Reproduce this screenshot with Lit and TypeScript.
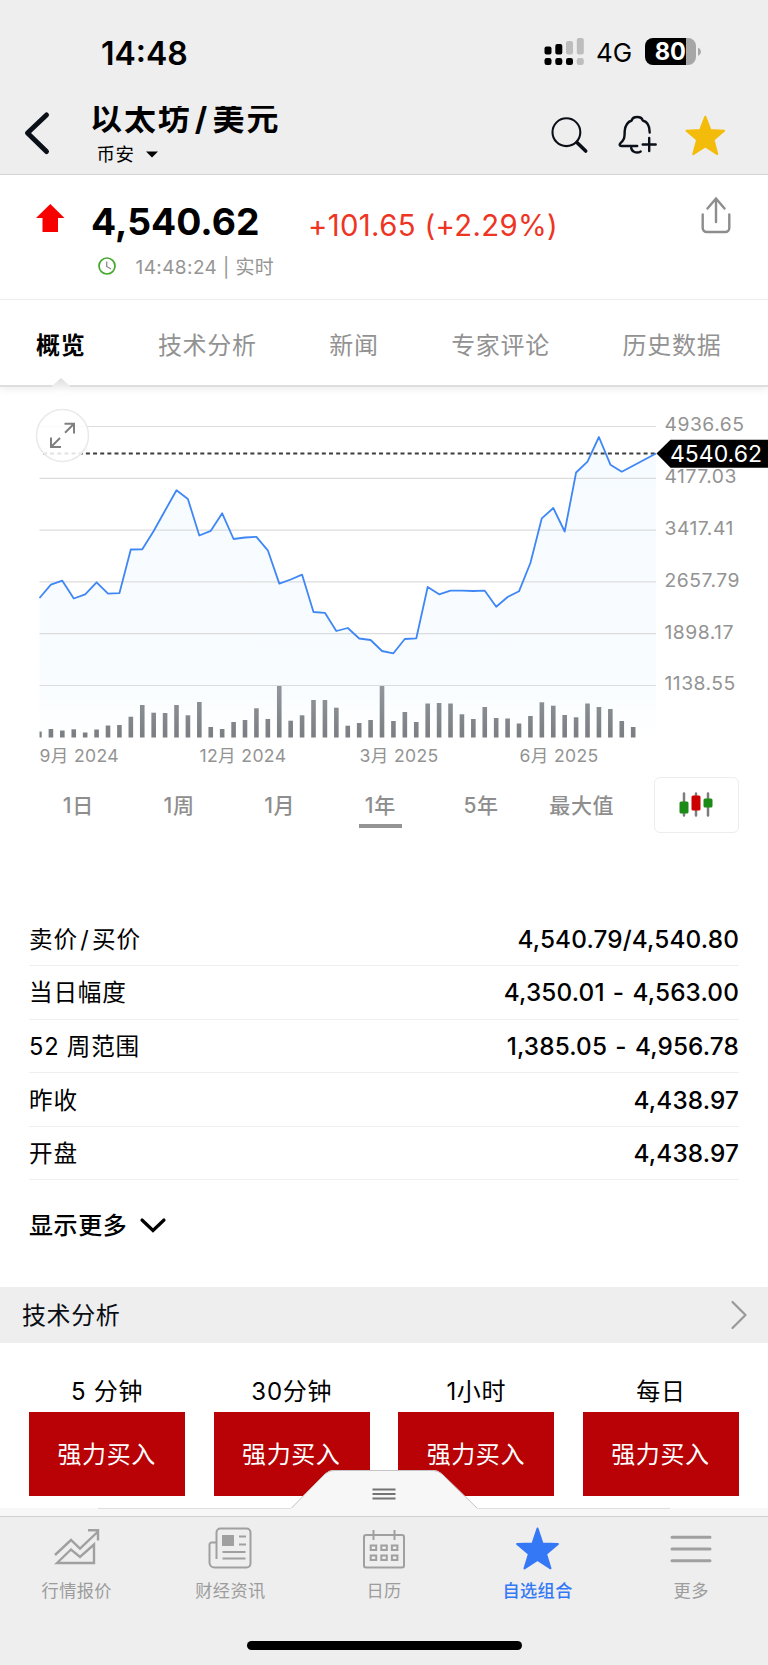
import { LitElement, html, svg, css } from "lit";
import { customElement } from "lit/decorators.js";
import { classMap } from "lit/directives/class-map.js";

const X0 = 39.5;
const STEP = 11.417;
const PRICES = [
  598, 584.7, 580.7, 598.5, 594.3, 582.3, 593.7, 593.2, 549.5, 549.3, 531, 510.5, 490.3, 499, 535.5, 530.8,
  513.3, 539, 537.5, 536.8, 550.3, 583.6, 579.5, 574.7, 612, 612.8, 631, 628, 638.5, 640, 651, 653.3, 639,
  638.3, 587, 594.3, 590.7, 590.7, 591, 590.7, 606.7, 597, 591.3, 563, 518.3, 508, 531.5, 472.5, 461.7, 437,
  464.7, 471.7,
];
const VOLUMES = [
  6, 8.5, 7, 8.2, 5, 8, 12, 12.5, 20.8, 32.5, 24.8, 24.5, 32.5, 22.2, 35.5, 10.5, 8.5, 15.5, 17.5, 29.2, 18.5,
  51.5, 16.8, 22.2, 37.5, 37.5, 29.8, 11.8, 14.5, 17.5, 51.5, 16.5, 25.5, 15.5, 34, 34.5, 34, 23.2, 18.5,
  30.5, 19.5, 19, 14, 21.5, 35.2, 31.8, 22.5, 20.2, 34, 30.5, 28.5, 16.5, 10.5,
];
const LEVELS = ["4936.65", "4177.03", "3417.41", "2657.79", "1898.17", "1138.55"];
const TABS = ["概览", "技术分析", "新闻", "专家评论", "历史数据"];
const DATES = ["9月 2024", "12月 2024", "3月 2025", "6月 2025"];
const RANGES = ["1日", "1周", "1月", "1年", "5年", "最大值"];
const STATS = [
  [html`卖价<span class="slash">/</span>买价`, "4,540.79/4,540.80"],
  ["当日幅度", "4,350.01 - 4,563.00"],
  ["52 周范围", "1,385.05 - 4,956.78"],
  ["昨收", "4,438.97"],
  ["开盘", "4,438.97"],
];
const SIGNALS = ["5 分钟", "30分钟", "1小时", "每日"];

const STAR = "M20 1.2 L25.2 14.6 L38.8 15.3 L28.2 24.2 L32 38.6 L20 31 L8 38.6 L11.8 24.2 L1.2 15.3 L14.8 14.6 Z";

const ICONS: Record<string, unknown> = {
  行情报价: svg`<path stroke-width="2.4" d="M2 29 18 14 27 22.5 44.5 6M35 4.3H45V14.5M4 37 18 23.5 27 31 41 18.5V37Z"/>`,
  财经资讯: svg`<path d="M10.5 33V6.5a4 4 0 0 1 4-4h26a4 4 0 0 1 4 4v31a4 4 0 0 1-4 4h-32a5 5 0 0 1-5-5v-18a2 2 0 0 1 2-2h5M16.5 26h23M16.5 32.5h23M33 10.5h7M33 18.5h7"/><path class="solid" d="M16 9h12v11H16z"/>`,
  日历: svg`<rect x="4" y="9" width="40" height="32.5" rx="2"/><path d="M13.5 4v10M34.5 4v10M10.7 19.5h5.5v4.6h-5.5zM21.3 19.5h5.5v4.6h-5.5zM31.9 19.5h5.5v4.6h-5.5zM10.7 29.5h5.5v4.6h-5.5zM21.3 29.5h5.5v4.6h-5.5zM31.9 29.5h5.5v4.6h-5.5z"/>`,
  自选组合: svg`<path class="solid" d="M23.5 2.5 28.5 17.6 43.9 18 32.1 28 36.5 42.4 23.5 34 10.5 42.4 14.9 28 3.1 18 18.5 17.6Z" stroke-linejoin="round"/>`,
  更多: svg`<path d="M5 11.2h38M5 23h38M5 34.8h38" stroke-width="3" stroke-linecap="round"/>`,
};

@customElement("price-chart")
export class PriceChart extends LitElement {
  static styles = css`
    :host { display: block; height: 352px; }
    .plot { display: block; }
    .grid { stroke: #dcdcdc; stroke-width: 1.2; }
    .dash { stroke: #3d3d3d; stroke-width: 1.8; stroke-dasharray: 4 3.15; }
    .area { fill: url(#fade); }
    .line { fill: none; stroke: #3f87f5; stroke-width: 1.8; stroke-linejoin: round; }
    .bar { fill: url(#steel); }
    .level { font: 400 19.3px Inter, sans-serif; fill: #939393; letter-spacing: 0.5px; }
    .now { font: 400 23px Inter, sans-serif; fill: #fff; }
    .disc { fill: #fff; fill-opacity: 0.85; stroke: #eaeaea; stroke-width: 1.6; }
    .arrows { fill: none; stroke: #808080; stroke-width: 2; }
  `;
  render() {
    const pts = PRICES.map((y, i) => `${(X0 + i * STEP).toFixed(1)},${y}`).concat("656,453.5");
    return html`<svg class="plot" width="768" height="352" viewBox="0 388 768 352">
      <defs>
        <linearGradient id="fade" gradientUnits="userSpaceOnUse" x1="0" y1="437" x2="0" y2="737">
          <stop offset="0" stop-color="#f6fbff" /><stop offset=".82" stop-color="#f8fcff" /><stop offset="1" stop-color="#fff" />
        </linearGradient>
        <linearGradient id="steel" gradientUnits="userSpaceOnUse" x1="0" y1="686" x2="0" y2="738">
          <stop offset="0" stop-color="#92979d" /><stop offset="1" stop-color="#7a7e82" />
        </linearGradient>
      </defs>
      <polygon class="area" points="${X0},737 ${pts.join(" ")} 656,737"></polygon>
      ${LEVELS.map((_, i) => svg`<line class="grid" x1="39.5" x2="656" y1=${426.5 + i * 51.8} y2=${426.5 + i * 51.8} />`)}
      ${VOLUMES.map((v, i) => svg`<rect class="bar" x=${i ? X0 + i * STEP - 2.3 : X0} y=${737.5 - v} width=${i ? 4.6 : 2.2} height=${v} />`)}
      <line class="dash" x1="43" x2="656" y1="453.5" y2="453.5" />
      <polyline class="line" points=${pts.join(" ")}></polyline>
      ${LEVELS.map((t, i) => svg`<text class="level" x="664.5" y=${431.3 + i * 51.8}>${t}</text>`)}
      <path d="M656.5 453.5 670.5 439.7H768V467.7H670.5Z" />
      <text class="now" x="670" y="462">4540.62</text>
      <circle class="disc" cx="62.5" cy="435.5" r="26" />
      <path class="arrows" d="M64.5 423.7H74V433.5M74 423.7 65 432.7M51 437.5V447H61M51 447 60 438" />
    </svg>`;
  }
}

@customElement("app-root")
export class AppRoot extends LitElement {
  static styles = css`
    :host { display: block; width: 768px; height: 1665px; position: relative; overflow: hidden; background: #fff; color: #000; font-family: Inter, "Noto Sans CJK SC", sans-serif; }
    * { box-sizing: border-box; }
    svg { display: block; flex: none; overflow: visible; }
    .status { height: 102px; background: #eee; display: flex; align-items: flex-start; padding: 34px 67px 0 101px; }
    .clock { font-size: 32px; line-height: 39px; font-weight: 600; flex: 1; }
    .net { font-size: 26px; line-height: 38px; width: 49px; }
    .signal { margin: 4px 12px 0 0; }
    .battery { margin-top: 4px; }
    .head { height: 73px; background: #eee; border-bottom: 1.5px solid #d2d2d2; display: flex; padding-left: 24px; }
    .back { margin-top: 9px; }
    .titles { margin: 4px 0 0 40px; flex: 1; }
    .title { height: 32px; overflow: hidden; font-size: 32px; line-height: 26px; font-weight: 700; letter-spacing: 1.9px; white-space: pre; }
    .title .slash { margin: 0 3.5px 0 3px; }
    .sub { display: flex; align-items: center; gap: 11px; padding-left: 6.5px; font-size: 18.5px; line-height: 32px; letter-spacing: .6px; }
    .sub svg { margin-top: 1px; }
    .tools { display: flex; margin: 12px 39px 0 0; }
    .quote { height: 125px; border-bottom: 1px solid #eee; display: flex; align-items: flex-start; }
    .up { margin: 29px 0 0 36px; }
    .figures { margin-left: 26px; flex: 1; }
    .prices { display: flex; align-items: baseline; margin-top: 23px; line-height: 48px; }
    .last { font-size: 37.3px; font-weight: 700; width: 217px; }
    .change { font-size: 29.3px; color: #ee3423; letter-spacing: .35px; position: relative; top: 1px; }
    .time { display: flex; align-items: flex-start; margin: 4px 0 0 6.5px; gap: 20px; font-size: 19px; line-height: 30px; color: #959595; letter-spacing: .4px; }
    .time svg { margin-top: 4px; }
    .share { margin: 21px 37px 0 0; }
    .tabs { height: 87px; display: flex; justify-content: space-between; padding: 24px 46.5px 0 36px; font-size: 24px; line-height: 43px; letter-spacing: .75px; color: #929292; border-bottom: 2px solid #dedede; box-shadow: 0 3px 7px #0001; position: relative; margin-bottom: 1px; }
    .tab.on { color: #000; font-weight: 700; }
    .notch { position: absolute; left: 51px; top: 77px; }
    .dates { height: 34px; padding: 1px 0 0 39.5px; display: grid; grid-template-columns: repeat(4, 160px); font-size: 17.6px; line-height: 30px; letter-spacing: .35px; color: #939393; white-space: nowrap; }
    .ranges { height: 138.5px; display: grid; grid-template-columns: repeat(6, 100.7px) 1fr; padding-left: 28px; text-align: center; font-size: 21px; line-height: 40px; letter-spacing: .7px; color: #8e8e8e; }
    .range { padding-top: 12px; font-weight: 500; }
    .range.on::after { content: ""; display: block; width: 43px; height: 4px; margin: -2px auto 0; background: #949494; }
    .candles { justify-self: start; margin: 3px 0 0 21.5px; width: 85px; height: 56px; border: 1.5px solid #ededed; border-radius: 6px; padding: 14px 23px; }
    .stats { padding: 0 29px; }
    .stat { height: 53.6px; border-bottom: 1.3px solid #efefef; display: flex; justify-content: space-between; align-items: center; font-size: 23.6px; }
    .key { letter-spacing: .8px; margin-top: -2px; }
    .key .slash { margin: 0 2.5px; }
    .val { font-size: 24.3px; font-weight: 500; letter-spacing: .15px; word-spacing: 1.6px; }
    .more { height: 99px; display: flex; align-items: flex-start; gap: 13px; padding: 25.5px 0 0 29px; font-size: 24px; line-height: 40px; letter-spacing: .6px; font-weight: 500; }
    .more svg { margin-top: 12px; }
    .band { height: 56px; margin-top: 7.5px; background: #eee; display: flex; align-items: center; justify-content: space-between; padding: 0 20px 0 22px; font-size: 24px; letter-spacing: .6px; color: #0a0d14; }
    .band span { margin-top: -3px; }
    .signals { display: grid; grid-template-columns: repeat(4, 156.3px); gap: 28.3px; padding: 28px 0 0 29px; text-align: center; }
    .when { font-size: 24px; line-height: 42px; height: 41px; letter-spacing: .7px; }
    .verdict { height: 84px; background: #b80205; color: #fff; font-size: 24px; line-height: 85px; letter-spacing: .6px; padding-right: 1px; }
    .dock { position: absolute; left: 0; right: 0; bottom: 0; }
    .drawer { display: block; }
    .nav { height: 149px; background: #eee; border-top: 1.5px solid #cfcfcf; }
    .items { display: grid; grid-template-columns: repeat(5, 1fr); padding-top: 9px; }
    .item { display: flex; flex-direction: column; align-items: center; font-size: 17.2px; line-height: 30px; letter-spacing: .4px; color: #9c9c9c; }
    .item svg { fill: none; stroke: #a0a0a0; stroke-width: 2; margin-bottom: 6px; }
    .item .solid { fill: #a0a0a0; stroke: none; }
    .item.on { color: #3478f6; font-weight: 500; }
    .item.on .solid { fill: #3478f6; stroke: #3478f6; stroke-width: 2; }
    .home { width: 275px; height: 9px; border-radius: 5px; background: #000; margin: 35px auto 0; }
  `;

  render() {
    return html`
      <div class="status">
        <div class="clock">14:48</div>
        <svg class="signal" width="40" height="28" viewBox="0 0 40 28">
          <g fill="#000"><rect x=".5" y="8.5" width="7" height="8" rx="2" /><rect x="11.3" y="6" width="7" height="10.5" rx="2" />
          <rect x=".5" y="20" width="7" height="7" rx="2.3" /><rect x="11.3" y="20" width="7" height="7" rx="2.3" /><rect x="22" y="20" width="7" height="7" rx="2.3" /></g>
          <g fill="#bdbdbd"><rect x="22" y="3" width="7" height="13.5" rx="2" /><rect x="32.8" y="0" width="7" height="16.5" rx="2" /><rect x="32.8" y="20" width="7" height="7" rx="2.3" /></g>
        </svg>
        <div class="net">4G</div>
        <svg class="battery" width="56" height="28" viewBox="0 0 56 28">
          <path fill="#a6a6a6" d="M40 0h3a8 8 0 0 1 8 8v11a8 8 0 0 1-8 8h-3zM53 9.5q3 1.5 3 4.3t-3 4.3z" />
          <path d="M8 0h33v27H8a8 8 0 0 1-8-8V8a8 8 0 0 1 8-8z" />
          <text x="9.7" y="22" fill="#fff" font-size="23.6" font-weight="700" font-family="Inter">80</text>
        </svg>
      </div>
      <div class="head">
        <svg class="back" width="26" height="44" viewBox="0 0 26 44"><path d="M22.5 4 3.5 22 22.5 40.5" fill="none" stroke="#0b0f18" stroke-width="5" stroke-linecap="round" stroke-linejoin="round" /></svg>
        <div class="titles">
          <div class="title">以太坊<span class="slash">/</span>美元</div>
          <div class="sub">币安<svg width="12" height="7" viewBox="0 0 12 7"><path d="M0 .5h12L6 6.5z" /></svg></div>
        </div>
        <div class="tools">
          <svg width="176" height="44" viewBox="0 0 176 44" fill="none" stroke="#0b0f18" stroke-width="2.1" stroke-linecap="round" stroke-linejoin="round">
            <circle cx="13.4" cy="18.2" r="13.9" /><path d="M24.2 28.7 32.7 37" stroke-width="3.6" />
            <path stroke-width="2.4" d="M96.7 18.5C96.7 10.5 94.2 7.5 89.7 6.5 88.7 1.8 79.7 1.8 78.7 6.5 74.2 8 72.2 12 71.7 17 71.7 25 70.7 26 67.2 29.5 66.2 31 66.7 32 68.2 32H84.2M78.2 34C78.7 37.5 83.2 40 87.7 37.5M89.7 30.5h13M96.2 24v13" />
            <path transform="translate(132.3 1.5)" fill="#f4bc0a" stroke="#f4bc0a" stroke-width="2" d="${STAR}" />
          </svg>
        </div>
      </div>
      <div class="quote">
        <svg class="up" width="29" height="29" viewBox="0 0 29 29"><path fill="#f70000" d="M14.3 0 28.5 14H22V28H6.5V14H0Z" /></svg>
        <div class="figures">
          <div class="prices"><span class="last">4,540.62</span><span class="change">+101.65 (+2.29%)</span></div>
          <div class="time">
            <svg width="18" height="18" viewBox="0 0 18 18" fill="none"><circle cx="9" cy="9" r="8" stroke="#44a82e" stroke-width="1.7" /><path d="M8.7 4.5V9.5L13 12" stroke="#8a8a8a" stroke-width="1.3" /></svg>
            <span>14:48:24 | 实时</span>
          </div>
        </div>
        <svg class="share" width="30" height="38" viewBox="0 0 30 38" fill="none" stroke="#8d8d8d" stroke-width="2.4" stroke-linecap="round" stroke-linejoin="round"><path d="M1.7 18.5V32a4 4 0 0 0 4 4H24.3a4 4 0 0 0 4-4V18.5M15 26V2.5M6.5 12.5 15 2.5 23.5 12.5" /></svg>
      </div>
      <div class="tabs">
        ${TABS.map((t, i) => html`<span class=${classMap({ tab: true, on: i === 0 })}>${t}</span>`)}
        <svg class="notch" width="20" height="16" viewBox="0 0 20 16">
          <defs><linearGradient id="tip" x1="0" y1="0" x2="0" y2="1"><stop offset="0" stop-color="#dcdcdc" /><stop offset="1" stop-color="#fff" /></linearGradient></defs>
          <path d="M1 9 10 1 19 9V16H1Z" fill="url(#tip)" />
        </svg>
      </div>
      <price-chart></price-chart>
      <div class="dates">${DATES.map((d) => html`<span>${d}</span>`)}</div>
      <div class="ranges">
        ${RANGES.map((r, i) => html`<div class=${classMap({ range: true, on: i === 3 })}>${r}</div>`)}
        <div class="candles"><svg width="36" height="26" viewBox="0 0 36 26">
          <path d="M6 1.5v22M18 1.5v22M30 1.5v22" stroke="#7d7d7d" stroke-width="2.5" stroke-linecap="round" />
          <rect x="1.5" y="9.5" width="9" height="12" rx="1.5" fill="#1c8a16" /><rect x="13.5" y="3.5" width="9" height="15" rx="1.5" fill="#c00" /><rect x="25.5" y="6.5" width="9" height="9" rx="1.5" fill="#1c8a16" />
        </svg></div>
      </div>
      <div class="stats">${STATS.map(([k, v]) => html`<div class="stat"><span class="key">${k}</span><span class="val">${v}</span></div>`)}</div>
      <div class="more">显示更多<svg width="26" height="16" viewBox="0 0 26 16"><path d="M2 2 13 12.5 24 2" fill="none" stroke="#000" stroke-width="3.2" stroke-linecap="round" /></svg></div>
      <div class="band"><span>技术分析</span><svg width="18" height="30" viewBox="0 0 18 30"><path d="M2.5 2 15.5 15 2.5 28" fill="none" stroke="#999" stroke-width="2.2" stroke-linecap="round" stroke-linejoin="round" /></svg></div>
      <div class="signals">${SIGNALS.map((s) => html`<div><div class="when">${s}</div><div class="verdict">强力买入</div></div>`)}</div>
      <div class="dock">
        <svg class="drawer" width="768" height="47" viewBox="0 0 768 47">
          <path fill="#f7f7f7" d="M0 39H291L325 5Q329 1 334 1H433Q438 1 442 5L477 39H768V47H0Z" />
          <path fill="none" stroke="#c4c4c4" d="M291.5 39 325 5Q329 1.5 334 1.5H433Q438 1.5 442 5L477 39" />
          <path stroke="#dedede" d="M98 39.5H291M477 39.5H670" />
          <path stroke="#737373" stroke-width="1.8" d="M372.5 20.5H395.5M372.5 25H395.5M372.5 29.5H395.5" />
        </svg>
        <div class="nav">
          <div class="items">${Object.keys(ICONS).map(
            (n) => html`<div class=${classMap({ item: true, on: n === "自选组合" })}><svg width="48" height="44" viewBox="0 0 48 44">${ICONS[n]}</svg>${n}</div>`
          )}</div>
          <div class="home"></div>
        </div>
      </div>
    `;
  }
}
